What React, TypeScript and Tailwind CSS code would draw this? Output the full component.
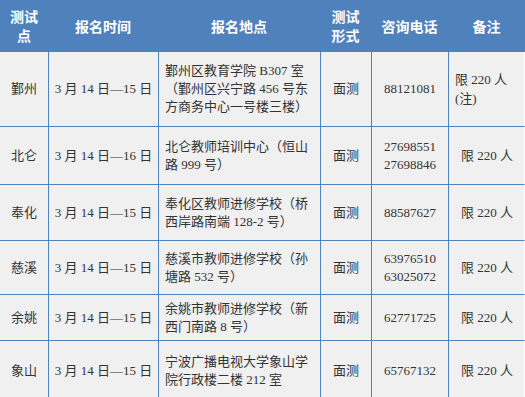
import React from 'react';

const rows = [
  {
    site: '鄞州',
    time: '3 月 14 日—15 日',
    place: ['鄞州区教育学院 B307 室', '（鄞州区兴宁路 456 号东', '方商务中心一号楼三楼）'],
    phone: ['88121081'],
    note: ['限 220 人', '(注)'],
    h: 'h-[75px]',
  },
  {
    site: '北仑',
    time: '3 月 14 日—16 日',
    place: ['北仑教师培训中心（恒山', '路 999 号）'],
    phone: ['27698551', '27698846'],
    note: ['限 220 人'],
    h: 'h-[58px]',
  },
  {
    site: '奉化',
    time: '3 月 14 日—15 日',
    place: ['奉化区教师进修学校（桥', '西岸路南端 128-2 号）'],
    phone: ['88587627'],
    note: ['限 220 人'],
    h: 'h-[56px]',
  },
  {
    site: '慈溪',
    time: '3 月 14 日—15 日',
    place: ['慈溪市教师进修学校（孙', '塘路 532 号）'],
    phone: ['63976510', '63025072'],
    note: ['限 220 人'],
    h: 'h-[54px]',
  },
  {
    site: '余姚',
    time: '3 月 14 日—15 日',
    place: ['余姚市教师进修学校（新', '西门南路 8 号）'],
    phone: ['62771725'],
    note: ['限 220 人'],
    h: 'h-[46px]',
  },
  {
    site: '象山',
    time: '3 月 14 日—15 日',
    place: ['宁波广播电视大学象山学', '院行政楼二楼 212 室'],
    phone: ['65767132'],
    note: ['限 220 人'],
    h: 'h-[60px]',
  },
];

const cols = 'grid grid-cols-[48px_110px_162px_51px_77px_77px]';
const cell = 'flex flex-col justify-center border-l border-[#4f81bd]';

export default function App() {
  return (
    <div
      className="w-[525px] h-[397px] overflow-hidden bg-white text-[13px] leading-[18px] text-[#333]"
      style={{ fontFamily: '"Liberation Serif", "Noto Sans CJK SC", serif' }}
    >
      {/* header */}
      <div
        className={`${cols} h-[52px] bg-[#4f81bd] text-white font-bold text-[14px] leading-[19px] text-center`}
        style={{ fontFamily: '"Noto Sans CJK SC", sans-serif' }}
      >
        <div className="flex flex-col justify-center">
          <span>测试</span>
          <span>点</span>
        </div>
        <div className="flex items-center justify-center">报名时间</div>
        <div className="flex items-center justify-center">报名地点</div>
        <div className="flex flex-col justify-center">
          <span>测试</span>
          <span>形式</span>
        </div>
        <div className="flex items-center justify-center">咨询电话</div>
        <div className="flex items-center justify-center">备注</div>
      </div>

      {rows.map((r, i) => (
        <div
          key={i}
          className={`${cols} ${r.h} bg-[#f0f0f0] border-b border-[#4f81bd] border-r border-r-white`}
        >
          <div className="flex items-center justify-center">{r.site}</div>
          <div className={`${cell} items-center`}>{r.time}</div>
          <div className={`${cell} pl-[6px]`}>
            {r.place.map((l, j) => (
              <span key={j} className="whitespace-nowrap">{l}</span>
            ))}
          </div>
          <div className={`${cell} items-center`}>面测</div>
          <div className={`${cell} items-center`}>
            {r.phone.map((p, j) => (
              <span key={j}>{p}</span>
            ))}
          </div>
          <div className={`${cell} ${r.note.length > 1 ? 'items-start pl-[6px] leading-[19px]' : 'items-center'}`}>
            {r.note.map((n, j) => (
              <span key={j}>{n}</span>
            ))}
          </div>
        </div>
      ))}
    </div>
  );
}
